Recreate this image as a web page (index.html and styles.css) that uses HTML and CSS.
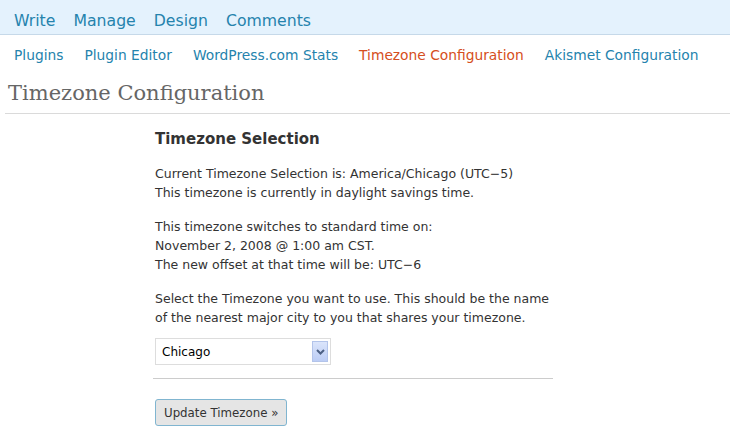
FILE: index.html
```html
<!DOCTYPE html>
<html>
<head>
<meta charset="utf-8">
<link rel="stylesheet" href="styles.css">
</head>
<body>
<div class="topnav">
  <a class="top-item">Write</a>
  <a class="top-item">Manage</a>
  <a class="top-item">Design</a>
  <a class="top-item">Comments</a>
</div>
<div class="subnav">
  <a class="sub-item">Plugins</a>
  <a class="sub-item">Plugin Editor</a>
  <a class="sub-item">WordPress.com Stats</a>
  <a class="sub-item current">Timezone Configuration</a>
  <a class="sub-item">Akismet Configuration</a>
</div>
<div class="wrap">
  <h2 class="page-title">Timezone Configuration</h2>
  <div class="content">
    <h3 class="section-title">Timezone Selection</h3>
    <p class="para p1">Current Timezone Selection is: America/Chicago (UTC−5)<br>This timezone is currently in daylight savings time.</p>
    <p class="para p2">This timezone switches to standard time on:<br>November 2, 2008 @ 1:00 am CST.<br>The new offset at that time will be: UTC−6</p>
    <p class="para p3">Select the Timezone you want to use. This should be the name<br>of the nearest major city to you that shares your timezone.</p>
    <div class="select">
      <span class="select-value">Chicago</span>
      <span class="select-btn"><svg width="9" height="6" viewBox="0 0 9 6"><path d="M1 1 L4.5 4.5 L8 1" fill="none" stroke="#4d6185" stroke-width="2"/></svg></span>
    </div>
    <div class="rule"></div>
    <button class="button">Update Timezone »</button>
  </div>
</div>
</body>
</html>
```
FILE: styles.css
```css
html, body { margin: 0; padding: 0; background: #fff; }
body { font-family: "DejaVu Sans", Verdana, sans-serif; color: #333; }
a { text-decoration: none; cursor: pointer; }
.topnav {
  height: 35px;
  background: #e4f2fd;
  border-bottom: 1px solid #c6d9e9;
  display: flex;
  align-items: center;
  padding-left: 14px;
  gap: 18px;
  box-sizing: border-box;
}
.top-item { font-size: 15.7px; color: #2583ad; padding-top: 6px; }
.subnav {
  display: flex;
  padding: 12px 0 0 14px;
  gap: 21px;
  height: 31px;
  box-sizing: border-box;
}
.sub-item { font-size: 13.8px; color: #2583ad; }
.sub-item.current { color: #d54e21; }
.wrap { padding: 0 0 0 5px; }
.page-title {
  margin: 15px 0 0 0;
  padding: 0 0 8px 3px;
  font-family: Georgia, "DejaVu Serif", serif;
  font-weight: normal;
  font-size: 21px;
  color: #666;
  border-bottom: 1px solid #dadada;
}
.content { padding-left: 150px; width: 400px; }
.section-title { margin: 16px 0 0 0; font-size: 15px; font-weight: bold; color: #333; }
.para { margin: 14px 0 0 0; font-size: 12.5px; line-height: 19px; color: #333; }
.p1 { margin-top: 16px; }
.p2 { margin-top: 15px; }
.p3 { margin-top: 15px; }
.select {
  margin-top: 11px;
  width: 176px;
  height: 27px;
  border: 1px solid #ddd;
  box-sizing: border-box;
  display: flex;
  align-items: center;
  justify-content: space-between;
  padding: 0 2px 0 6px;
  font-size: 12px;
  color: #000;
}
.select-btn {
  width: 16px; height: 21px;
  background: linear-gradient(#dbe5fb, #bccdf5);
  border: 1px solid #b3c4ea;
  box-sizing: border-box;
  display: flex; align-items: center; justify-content: center;
}
.rule { margin-top: 13px; height: 1px; background: #ccc; width: 400px; margin-left: -2px; }
.button {
  margin-top: 20px;
  font-family: "DejaVu Sans", Verdana, sans-serif;
  font-size: 11.8px;
  color: #333;
  background: #e5e5e5;
  border: 1px solid #80b5d0;
  border-radius: 3px;
  height: 27px;
  padding: 0 8px;
}
```
